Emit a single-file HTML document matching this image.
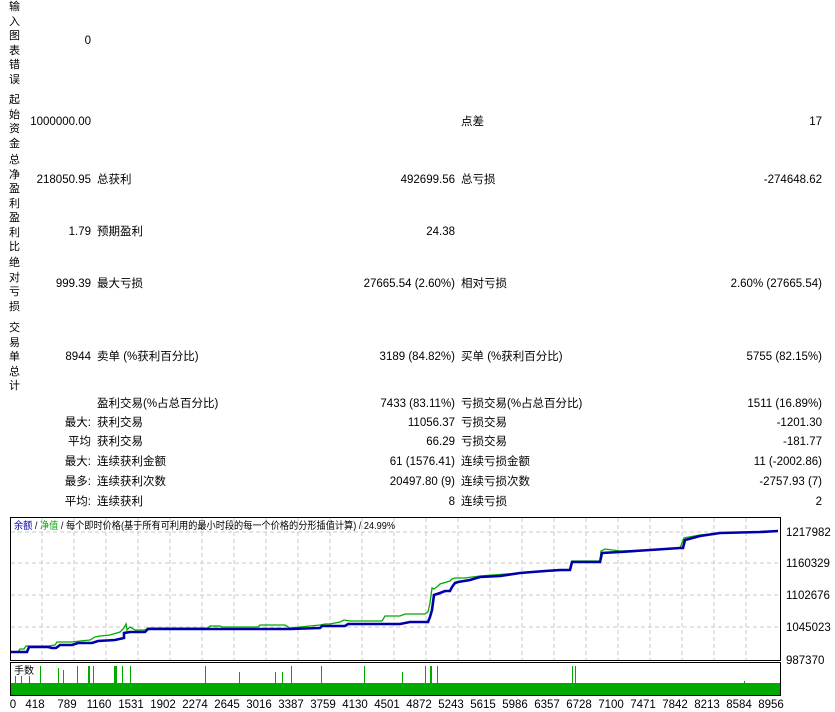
<!DOCTYPE html><html><head><meta charset="utf-8"><style>
body{margin:0;width:835px;height:712px;background:#fff;position:relative;overflow:hidden;font-family:"Liberation Sans","Noto Sans CJK SC",sans-serif;font-size:11.5px;color:#000}
.a{position:absolute;white-space:nowrap;line-height:14px}
.r{text-align:right}
.v{position:absolute;left:9px;width:12px;line-height:14.5px;font-size:11px;white-space:normal;word-break:break-all}
</style></head><body>
<div class="v" style="top:0">输入图表错误</div>
<div class="v" style="top:93px">起始资金</div>
<div class="v" style="top:153px">总净盈利</div>
<div class="v" style="top:211px">盈利比</div>
<div class="v" style="top:256px">绝对亏损</div>
<div class="v" style="top:321px">交易单总计</div>

<div class="a r" style="right:744px;top:34px">0</div>
<div class="a r" style="right:744px;top:115px">1000000.00</div>
<div class="a" style="left:461px;top:115px">点差</div><div class="a r" style="right:13px;top:115px">17</div>

<div class="a r" style="right:744px;top:173px">218050.95</div><div class="a" style="left:97px;top:173px">总获利</div>
<div class="a r" style="right:380px;top:173px">492699.56</div><div class="a" style="left:461px;top:173px">总亏损</div><div class="a r" style="right:13px;top:173px">-274648.62</div>

<div class="a r" style="right:744px;top:225px">1.79</div><div class="a" style="left:97px;top:225px">预期盈利</div>
<div class="a r" style="right:380px;top:225px">24.38</div>

<div class="a r" style="right:744px;top:277px">999.39</div><div class="a" style="left:97px;top:277px">最大亏损</div>
<div class="a r" style="right:380px;top:277px">27665.54 (2.60%)</div><div class="a" style="left:461px;top:277px">相对亏损</div><div class="a r" style="right:13px;top:277px">2.60% (27665.54)</div>

<div class="a r" style="right:744px;top:350px">8944</div><div class="a" style="left:97px;top:350px">卖单 (%获利百分比)</div>
<div class="a r" style="right:380px;top:350px">3189 (84.82%)</div><div class="a" style="left:461px;top:350px">买单 (%获利百分比)</div><div class="a r" style="right:13px;top:350px">5755 (82.15%)</div>

<div class="a" style="left:97px;top:397px">盈利交易(%占总百分比)</div><div class="a r" style="right:380px;top:397px">7433 (83.11%)</div><div class="a" style="left:461px;top:397px">亏损交易(%占总百分比)</div><div class="a r" style="right:13px;top:397px">1511 (16.89%)</div>

<div class="a r" style="right:744px;top:416px">最大:</div><div class="a" style="left:97px;top:416px">获利交易</div><div class="a r" style="right:380px;top:416px">11056.37</div><div class="a" style="left:461px;top:416px">亏损交易</div><div class="a r" style="right:13px;top:416px">-1201.30</div>

<div class="a r" style="right:744px;top:435px">平均</div><div class="a" style="left:97px;top:435px">获利交易</div><div class="a r" style="right:380px;top:435px">66.29</div><div class="a" style="left:461px;top:435px">亏损交易</div><div class="a r" style="right:13px;top:435px">-181.77</div>

<div class="a r" style="right:744px;top:455px">最大:</div><div class="a" style="left:97px;top:455px">连续获利金额</div><div class="a r" style="right:380px;top:455px">61 (1576.41)</div><div class="a" style="left:461px;top:455px">连续亏损金额</div><div class="a r" style="right:13px;top:455px">11 (-2002.86)</div>

<div class="a r" style="right:744px;top:475px">最多:</div><div class="a" style="left:97px;top:475px">连续获利次数</div><div class="a r" style="right:380px;top:475px">20497.80 (9)</div><div class="a" style="left:461px;top:475px">连续亏损次数</div><div class="a r" style="right:13px;top:475px">-2757.93 (7)</div>

<div class="a r" style="right:744px;top:495px">平均:</div><div class="a" style="left:97px;top:495px">连续获利</div><div class="a r" style="right:380px;top:495px">8</div><div class="a" style="left:461px;top:495px">连续亏损</div><div class="a r" style="right:13px;top:495px">2</div>

<svg style="position:absolute;left:0;top:0" width="835" height="712">
<g stroke="#c8c8c8" stroke-dasharray="4,3" stroke-width="1">
<line x1="11" y1="532" x2="780" y2="532"/><line x1="11" y1="563" x2="780" y2="563"/><line x1="11" y1="595" x2="780" y2="595"/><line x1="11" y1="627" x2="780" y2="627"/>
<line x1="42" y1="518" x2="42" y2="660"/><line x1="74" y1="518" x2="74" y2="660"/><line x1="106" y1="518" x2="106" y2="660"/><line x1="138" y1="518" x2="138" y2="660"/><line x1="170" y1="518" x2="170" y2="660"/><line x1="202" y1="518" x2="202" y2="660"/><line x1="234" y1="518" x2="234" y2="660"/><line x1="266" y1="518" x2="266" y2="660"/><line x1="298" y1="518" x2="298" y2="660"/><line x1="330" y1="518" x2="330" y2="660"/><line x1="362" y1="518" x2="362" y2="660"/><line x1="394" y1="518" x2="394" y2="660"/><line x1="426" y1="518" x2="426" y2="660"/><line x1="458" y1="518" x2="458" y2="660"/><line x1="490" y1="518" x2="490" y2="660"/><line x1="522" y1="518" x2="522" y2="660"/><line x1="554" y1="518" x2="554" y2="660"/><line x1="586" y1="518" x2="586" y2="660"/><line x1="618" y1="518" x2="618" y2="660"/><line x1="650" y1="518" x2="650" y2="660"/><line x1="682" y1="518" x2="682" y2="660"/><line x1="714" y1="518" x2="714" y2="660"/><line x1="746" y1="518" x2="746" y2="660"/>
</g>
<rect x="10.5" y="517.5" width="770" height="143" fill="none" stroke="#000"/>
<rect x="10.5" y="662.5" width="770" height="33" fill="none" stroke="#000"/>
<rect x="11" y="683" width="769" height="12" fill="#00aa00"/>
<g fill="#00aa00">
<rect x="15" y="676" width="1" height="7"/><rect x="21" y="676" width="1" height="7"/><rect x="29" y="676" width="1" height="7"/><rect x="40" y="666" width="1" height="17"/><rect x="58" y="668" width="1" height="15"/><rect x="63" y="670" width="1" height="13"/><rect x="77" y="666" width="1" height="17"/><rect x="88" y="666" width="2" height="17"/><rect x="93" y="666" width="1" height="17"/><rect x="114" y="666" width="3" height="17"/><rect x="122" y="666" width="1" height="17"/><rect x="130" y="666" width="1" height="17"/><rect x="205" y="666" width="1" height="17"/><rect x="239" y="672" width="1" height="11"/><rect x="275" y="672" width="1" height="11"/><rect x="282" y="672" width="1" height="11"/><rect x="291" y="666" width="1" height="17"/><rect x="321" y="666" width="1" height="17"/><rect x="364" y="666" width="1" height="17"/><rect x="402" y="672" width="1" height="11"/><rect x="425" y="666" width="1" height="17"/><rect x="430" y="666" width="2" height="17"/><rect x="437" y="666" width="1" height="17"/><rect x="572" y="666" width="1" height="17"/><rect x="575" y="666" width="1" height="17"/><rect x="744" y="681" width="1" height="2"/>
</g>
<polyline fill="none" stroke="#00aa00" stroke-width="1.3" points="11,652 18,652 20,649 24,649 26,646 40,646 48,646 55,645 57,642 72,642 80,641 90,640 95,637 100,636 110,635 120,632 124,628 126,624 127,630 130,627 135,630 145,630 148,628 165,628 185,628 208,628 210,626 220,626 222,627 258,627 260,625 285,625 290,628 300,627 320,625 325,624 330,624 340,622 344,620 350,621 360,621 382,621 385,616 400,616 405,614 425,614 428,612 430,603 432,588 434,589 438,586 440,584 450,581 452,579 455,578 460,578 465,578 480,576 520,573 570,570 572,561 600,561 601,551 605,549 620,551 650,550 680,548 684,538 700,535 720,533 760,532 778,531"/>
<polyline fill="none" stroke="#0000aa" stroke-width="2.6" points="11,652 27,652 29,647 48,647 52,648 56,648 60,645 72,645 78,643 92,643 98,641 115,640 124,638 124,633 130,632 145,632 148,629 165,629 185,629 215,629 240,629 290,629 320,628 322,626 345,626 348,624 370,624 390,624 400,624 410,622 428,622 430,617 432,610 434,595 440,593 445,591 450,591 452,587 455,583 458,582 470,580 480,577 500,576 520,573 545,571 560,570 570,570 572,562 580,562 600,562 602,553 620,552 650,550 680,548 683,548 685,540 700,536 720,533 760,532 778,531"/>
<g font-family="Liberation Sans, sans-serif" font-size="11.5">
<text x="786" y="536">1217982</text><text x="786" y="567">1160329</text><text x="786" y="599">1102676</text><text x="786" y="631">1045023</text><text x="786" y="664">987370</text>
<g text-anchor="middle"><text x="13" y="708">0</text><text x="35" y="708">418</text><text x="67" y="708">789</text><text x="99" y="708">1160</text><text x="131" y="708">1531</text><text x="163" y="708">1902</text><text x="195" y="708">2274</text><text x="227" y="708">2645</text><text x="259" y="708">3016</text><text x="291" y="708">3387</text><text x="323" y="708">3759</text><text x="355" y="708">4130</text><text x="387" y="708">4501</text><text x="419" y="708">4872</text><text x="451" y="708">5243</text><text x="483" y="708">5615</text><text x="515" y="708">5986</text><text x="547" y="708">6357</text><text x="579" y="708">6728</text><text x="611" y="708">7100</text><text x="643" y="708">7471</text><text x="675" y="708">7842</text><text x="707" y="708">8213</text><text x="739" y="708">8584</text><text x="771" y="708">8956</text></g>
</g>
<text x="14" y="529" font-size="10" textLength="381" lengthAdjust="spacingAndGlyphs" font-family="Liberation Sans, Noto Sans CJK SC, sans-serif"><tspan fill="#0000aa">余额</tspan> / <tspan fill="#00aa00">净值</tspan> / 每个即时价格(基于所有可利用的最小时段的每一个价格的分形插值计算) / 24.99%</text>
<text x="14" y="674" font-size="10" font-family="Liberation Sans, Noto Sans CJK SC, sans-serif">手数</text>
</svg>
</body></html>
